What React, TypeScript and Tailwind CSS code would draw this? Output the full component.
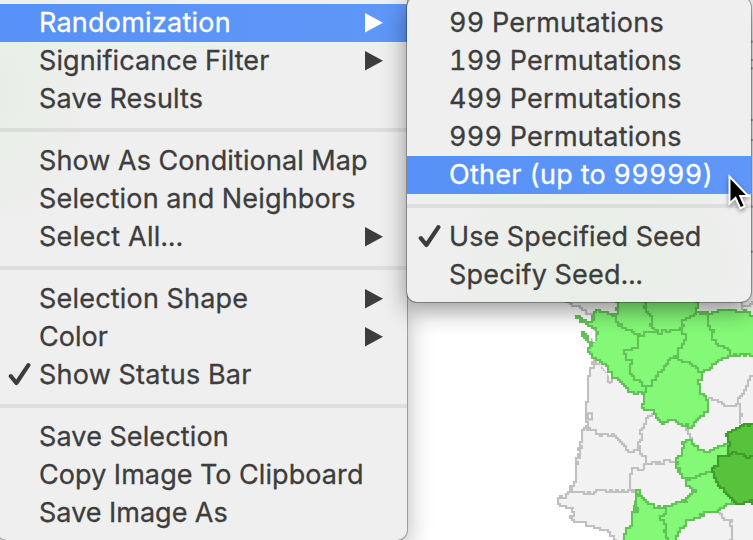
import React from "react";

type Item = { label: string; spacing: string; arrow?: boolean; checked?: boolean; active?: boolean };
type Group = Item[];

const mainMenu: Group[] = [
  [
    { label: "Randomization", spacing: "tracking-[0.23px]", arrow: true, active: true },
    { label: "Significance Filter", spacing: "tracking-[0.1px]", arrow: true },
    { label: "Save Results", spacing: "tracking-[0.15px]" },
  ],
  [
    { label: "Show As Conditional Map", spacing: "tracking-[0.12px]" },
    { label: "Selection and Neighbors", spacing: "tracking-[0.17px]" },
    { label: "Select All...", spacing: "tracking-[0.3px]", arrow: true },
  ],
  [
    { label: "Selection Shape", spacing: "tracking-[0.2px]", arrow: true },
    { label: "Color", spacing: "tracking-[0px]", arrow: true },
    { label: "Show Status Bar", spacing: "tracking-[0.24px]", checked: true },
  ],
  [
    { label: "Save Selection", spacing: "tracking-[0.13px]" },
    { label: "Copy Image To Clipboard", spacing: "tracking-[0.09px]" },
    { label: "Save Image As", spacing: "tracking-[0.04px]" },
  ],
];

const subMenu: Group[] = [
  [
    { label: "99 Permutations", spacing: "tracking-[0.25px]" },
    { label: "199 Permutations", spacing: "tracking-[0.25px]" },
    { label: "499 Permutations", spacing: "tracking-[0.25px]" },
    { label: "999 Permutations", spacing: "tracking-[0.25px]" },
    { label: "Other (up to 99999)", spacing: "tracking-[0.28px]", active: true },
  ],
  [
    { label: "Use Specified Seed", spacing: "tracking-[0.12px]", checked: true },
    { label: "Specify Seed...", spacing: "tracking-[0.2px]" },
  ],
];

function MenuRow({ item }: { item: Item }) {
  return (
    <div
      className={`flex h-[38px] items-center pr-6 ${
        item.active ? "bg-linear-to-r from-[#5891f7] to-[#5f97f8] text-white" : "text-[#3d3d3d]"
      }`}
    >
      <span className="flex w-[42px] shrink-0 justify-start pl-[11px]">
        {item.checked && (
          <svg width="24" height="24" viewBox="0 0 24 24" fill="none" stroke="currentColor">
            <path d="M2.8 13.2 L8.4 20 L20.4 2.2" strokeWidth="4.2" strokeLinecap="round" strokeLinejoin="round" />
          </svg>
        )}
      </span>
      <span
        className={`whitespace-nowrap text-[27px] leading-[38px] tabular-nums [-webkit-text-stroke:0.3px_currentColor] ${item.spacing}`}
      >
        {item.label}
      </span>
      {item.arrow && (
        <svg className="ml-auto" width="18" height="20" viewBox="0 0 18 20">
          <path d="M0 0 L18 9.7 L0 19.4Z" fill="currentColor" />
        </svg>
      )}
    </div>
  );
}

function MenuBody({ groups }: { groups: Group[] }) {
  return (
    <>
      {groups.map((group, i) => (
        <React.Fragment key={i}>
          {i > 0 && <div className="my-[10px] h-1 bg-black/7" />}
          {group.map((item) => (
            <MenuRow key={item.label} item={item} />
          ))}
        </React.Fragment>
      ))}
    </>
  );
}

/* Turns a polyline into the stair steps of a two-pixel raster grid (6 drawing units). */
function steps(points: string, closed = false): string {
  const pts = points.trim().split(/\s+/).map((p) => p.split(",").map(Number));
  if (closed) pts.push(pts[0]);
  const snap = (v: number) => Math.round(v / 6) * 6;
  let d = `M${snap(pts[0][0])} ${snap(pts[0][1])}`;
  for (let i = 1; i < pts.length; i++) {
    const [ax, ay] = pts[i - 1];
    const [bx, by] = pts[i];
    const n = Math.max(1, Math.round(Math.hypot(bx - ax, by - ay) / 9));
    for (let k = 1; k <= n; k++) {
      const x = ax + ((bx - ax) * k) / n;
      const y = ay + ((by - ay) * k) / n;
      const wobble = k < n ? Math.sin(x * 1.7 + y * 2.3) * 4 : 0;
      const horizontal = Math.abs(bx - ax) > Math.abs(by - ay);
      const px = snap(x + (horizontal ? 0 : wobble));
      const py = snap(y + (horizontal ? wobble : 0));
      d += `H${px}V${py}`;
    }
  }
  return closed ? d + "Z" : d;
}

const land =
  "50,38 65,50 90,55 110,70 128,80 130,150 132,215 120,250 115,310 107,370 106,385 108,415 103,420 96,450 88,490 80,530 70,585 60,606 45,622 22,630 22,640 40,650 70,655 72,675 60,685 70,695 90,695 105,705 130,712 160,720 180,738 200,760 640,760 640,-900 50,-900";
const grayBorders = [
  "132,215 155,232 172,255 180,282 188,270 188,255",
  "105,418 130,420 138,432 185,434 205,448 222,470 228,482 262,480",
  "318,370 298,378 290,400 275,420 275,450 265,465 262,480 268,490 290,500 288,520",
  "288,520 315,522 350,512 380,514",
  "282,538 245,534 240,560 238,600",
  "288,520 282,538",
  "60,606 130,608 160,602 262,602",
  "475,325 500,330 520,348 565,342 565,325 590,290 600,255 612,250",
  "565,342 575,380 572,400",
  "412,410 418,440 428,452",
  "508,665 515,682 540,690 546,715 540,760",
  "572,36 578,60",
  "612,38 598,50 578,52",
];
const greenNorth =
  "203,-30 203,72 182,70 150,62 140,68 128,82 128,96 110,98 97,84 80,84 88,94 122,106 140,124 140,150 128,165 116,140 97,124 97,138 115,155 120,165 115,188 140,210 165,222 185,250 185,262 205,268 228,295 245,307 283,307 283,340 275,355 283,362 312,364 318,382 328,398 370,392 395,405 425,412 430,398 460,374 472,352 470,320 450,300 447,280 455,245 480,232 510,210 540,195 570,192 600,200 640,200 640,80 609,75 590,62 550,58 515,62 485,70 465,68 440,60 440,-30";
const northLines = [
  "185,70 195,98 230,120 268,138",
  "283,20 285,65 302,78 302,110 312,122",
  "268,138 290,124 345,126 380,118 395,100 410,85 440,68 472,68",
  "268,138 265,172 228,180 226,208 243,220 240,250 250,270 285,290 300,285 318,260 340,230 372,195 395,170 405,140 395,118 400,100",
  "283,307 285,290",
  "372,195 385,212 412,214 435,235 455,245",
  "472,68 476,105 490,125 488,148 505,170 535,180 540,195",
];
const greenSouth =
  "398,455 428,452 432,468 460,485 490,475 532,465 580,520 580,640 535,640 515,655 505,665 470,668 440,685 412,692 408,710 385,730 380,760 220,760 225,720 245,700 248,665 260,640 258,600 270,600 272,615 290,635 295,643 330,655 352,650 375,634 412,636 415,615 435,600 412,585 405,565 385,540 380,505 398,490";
const southLines = [
  "405,565 440,560 460,550 488,545",
  "352,650 345,670 332,688 350,712 345,745 355,760",
  "248,665 262,665 260,640",
];

function MapView() {
  return (
    <svg className="absolute inset-0" width="753" height="540" viewBox="0 0 753 540">
      <g transform="translate(550 290) scale(0.33334)" strokeWidth="6.3" strokeLinejoin="miter">
        <path d={steps(land, true)} fill="#f2f2f2" stroke="#c0c0c0" />
        <path d="M108 370 h18 v18 h-12 v-12 h-6Z" fill="#fff" stroke="#c0c0c0" />
        {grayBorders.map((line) => (
          <path key={line} d={steps(line)} fill="none" stroke="#c0c0c0" />
        ))}
        {[-745, -690, -665, -510, -450, -250, -115].map((y) => (
          <path key={y} d={`M600 ${y}h12`} stroke="#b0b0b0" />
        ))}
        <path d="M142 210 L184 252 L184 268 L164 240Z" fill="#fff" />
        <path d={steps(greenNorth, true)} fill="#84f877" stroke="#62c258" />
        <path d="M124 122h12v34h-8v-12h-10v-10h6Z" fill="#fff" />
        <path d={steps(greenSouth, true)} fill="#84f877" stroke="#62c258" />
        {[...northLines, ...southLines].map((line) => (
          <path key={line} d={steps(line)} fill="none" stroke="#62c258" />
        ))}
        <path d="M252 632h9v38h-9Z" fill="#62c258" />
        <path
          d={steps("640,400 600,405 575,402 570,415 550,420 530,440 538,465 532,495 505,505 502,528 485,540 492,565 505,590 525,610 550,635 570,642 590,635 640,640", true)}
          fill="#57c33d"
          stroke="#3f9c2b"
        />
        <path d={steps("532,495 565,490 580,498 640,508")} fill="none" stroke="#3f9c2b" />
      </g>
    </svg>
  );
}

export default function App() {
  return (
    <div className="relative h-[540px] w-[753px] overflow-hidden bg-white font-['Inter','Liberation_Sans',sans-serif]">
      <MapView />
      <div className="absolute top-[-20px] left-[-3px] h-[560px] w-[410px] rounded-[10px] bg-[#efefef] bg-[radial-gradient(ellipse_100px_150px_at_0px_110px,#e7eee5,#efefef)] pt-6 shadow-[0_0_0_1px_rgba(0,0,0,0.28),0_10px_26px_rgba(0,0,0,0.3)]">
        <MenuBody groups={mainMenu} />
      </div>
      <div className="absolute top-[-3px] left-[407px] h-[305px] w-[344px] rounded-[10px] bg-[#efefef] bg-[radial-gradient(ellipse_170px_140px_at_190px_270px,#e8eee6,#efefef)] pt-[7px] shadow-[0_0_0_1px_rgba(0,0,0,0.3),0_8px_24px_rgba(0,0,0,0.42)]">
        <MenuBody groups={subMenu} />
      </div>
      <svg
        className="absolute top-[170px] left-[724px] drop-shadow-[0_2px_2px_rgba(0,0,0,0.4)]"
        width="29"
        height="44"
        viewBox="0 0 29 44"
      >
        <path
          d="M5.5 6.5 V33.5 L11.5 28 L16.3 38.3 L20.8 36.2 L16.2 26 H24.2Z"
          fill="#000"
          stroke="#fff"
          strokeWidth="2"
        />
      </svg>
    </div>
  );
}
